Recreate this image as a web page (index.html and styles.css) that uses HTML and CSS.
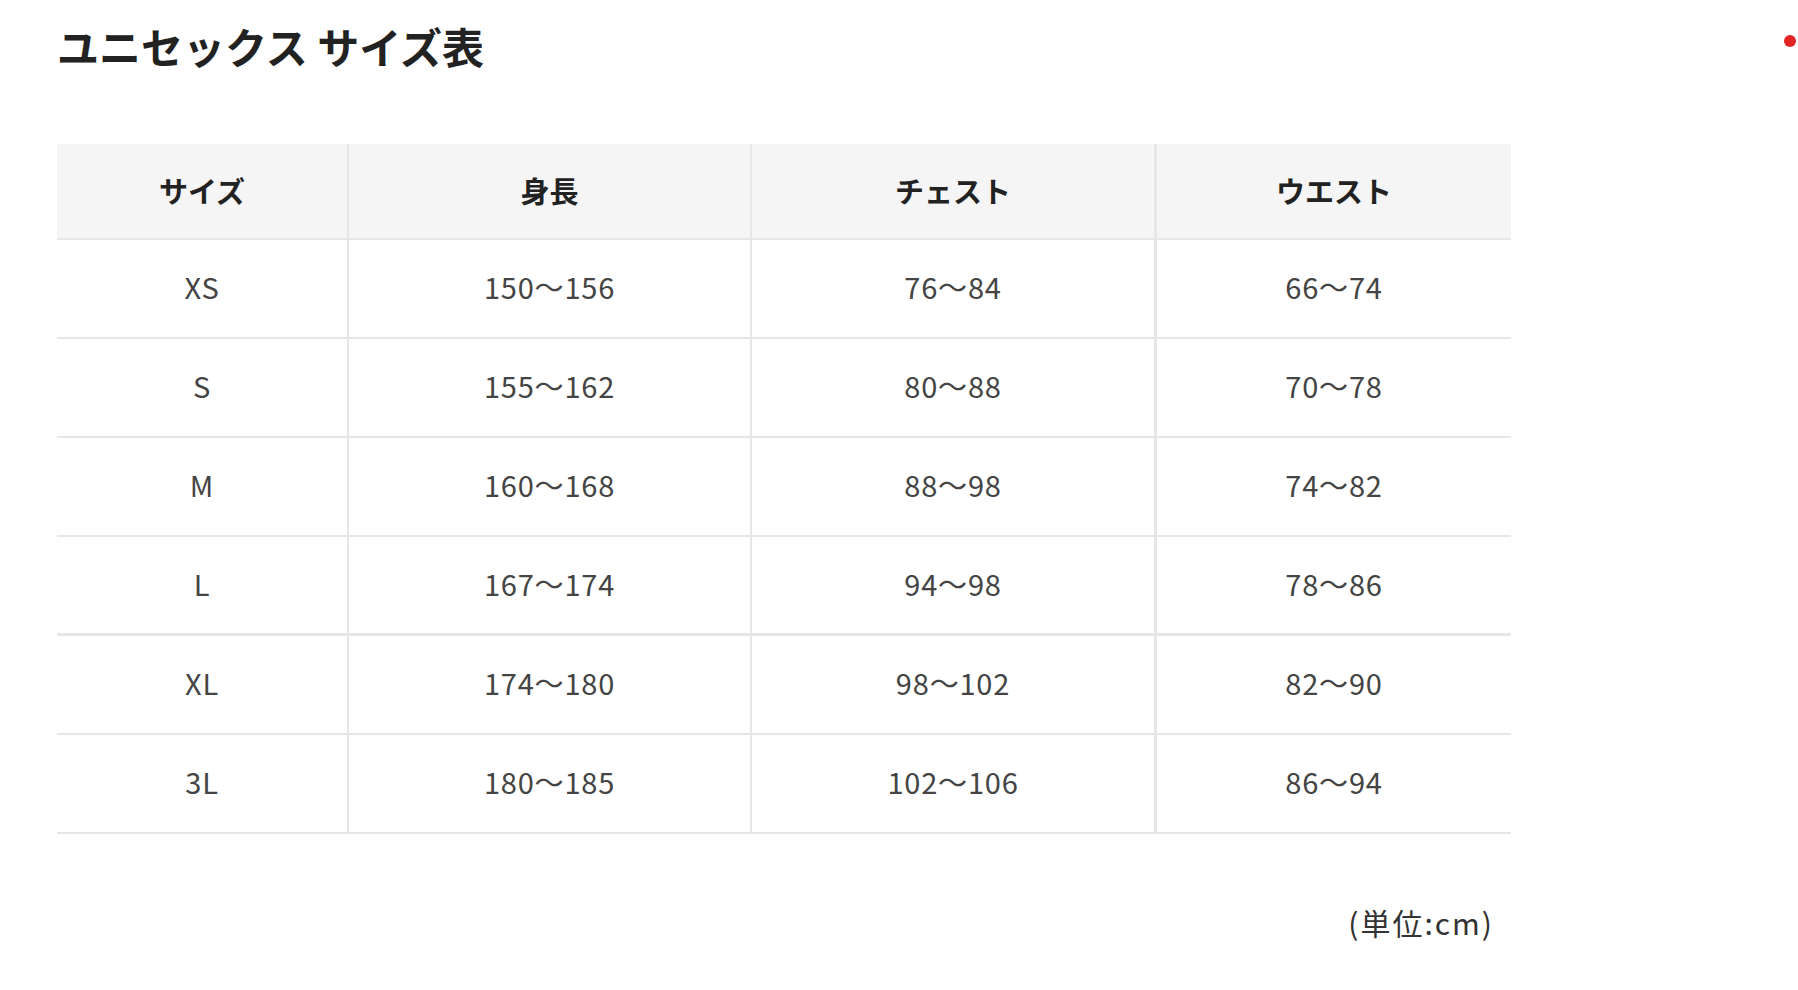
FILE: index.html
```html
<!DOCTYPE html>
<html lang="ja">
<head>
<meta charset="utf-8">
<title>ユニセックス サイズ表</title>
<link rel="stylesheet" href="styles.css">
</head>
<body>
<span class="dot"></span>
<main class="page">
  <h1 class="title">ユニセックス サイズ表</h1>
  <table class="size-table">
    <colgroup>
      <col class="c1"><col class="c2"><col class="c3"><col class="c4">
    </colgroup>
    <thead>
      <tr><th>サイズ</th><th>身長</th><th>チェスト</th><th>ウエスト</th></tr>
    </thead>
    <tbody>
      <tr><td>XS</td><td>150～156</td><td>76～84</td><td>66～74</td></tr>
      <tr><td>S</td><td>155～162</td><td>80～88</td><td>70～78</td></tr>
      <tr><td>M</td><td>160～168</td><td>88～98</td><td>74～82</td></tr>
      <tr class="thick"><td>L</td><td>167～174</td><td>94～98</td><td>78～86</td></tr>
      <tr><td>XL</td><td>174～180</td><td>98～102</td><td>82～90</td></tr>
      <tr><td>3L</td><td>180～185</td><td>102～106</td><td>86～94</td></tr>
    </tbody>
  </table>
  <p class="unit">(単位:cm)</p>
</main>
</body>
</html>
```
FILE: styles.css
```css
html, body {
  margin: 0;
  padding: 0;
  background: #fff;
}
body {
  font-family: "Noto Sans CJK JP", "Noto Sans", sans-serif;
  color: #333;
}
.dot {
  position: absolute;
  left: 1784px;
  top: 35px;
  width: 12px;
  height: 12px;
  border-radius: 50%;
  background: #e32424;
}
.page {
  padding: 18px 0 40px 57px;
  width: 1454px;
}
.title {
  margin: 0;
  font-size: 42px;
  line-height: 56px;
  font-weight: 700;
  color: #222;
}
.size-table {
  margin-top: 70px;
  width: 1454px;
  border-collapse: separate;
  border-spacing: 0;
  table-layout: fixed;
}
.c1 { width: 292px; }
.c2 { width: 403px; }
.c3 { width: 405px; }
.c4 { width: 354px; }
.size-table th,
.size-table td {
  padding: 0;
  text-align: center;
  border-bottom: 2px solid #e6e6e6;
  border-right: 2px solid #e6e6e6;
}
.size-table th:last-child,
.size-table td:last-child {
  border-right: none;
}
.size-table th:nth-child(3),
.size-table td:nth-child(3) {
  border-right-width: 3px;
}
.size-table th {
  background: #f6f5f5;
  font-size: 29px;
  font-weight: 700;
  line-height: 92px;
  padding-bottom: 2px;
  color: #222;
}
.size-table td {
  font-size: 29px;
  font-weight: 400;
  letter-spacing: 0.8px;
  line-height: 93px;
  padding-bottom: 4px;
  color: #444;
}
.size-table tr.thick td {
  border-bottom-width: 3px;
  padding-bottom: 3px;
}
.unit {
  margin: 68px 0 0;
  padding-right: 17px;
  text-align: right;
  font-size: 30px;
  letter-spacing: 2px;
  line-height: 40px;
  color: #333;
}
```
